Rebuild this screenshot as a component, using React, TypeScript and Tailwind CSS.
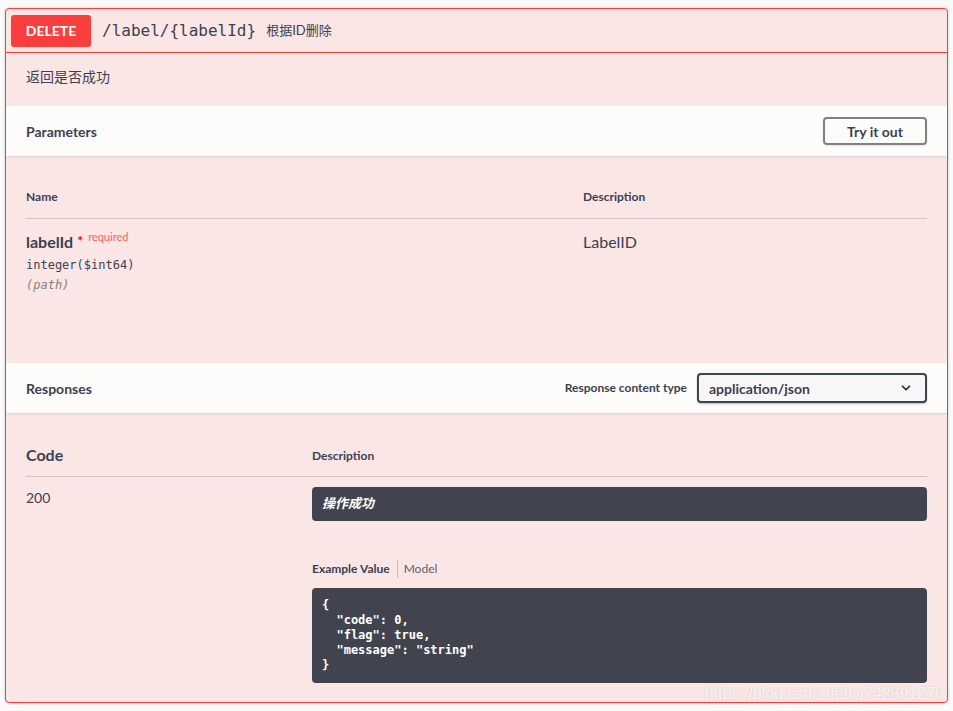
import { ChevronDown } from 'lucide-react';

const SANS = "font-['Lato','Noto_Sans_CJK_SC',sans-serif]";
const MONO = "font-['DejaVu_Sans_Mono',monospace]";

function SectionBar({ title, children }: { title: string; children?: React.ReactNode }) {
  return (
    <div className="flex items-center justify-between h-[50px] px-[20px] bg-[#fefbfb] shadow-[0_1px_2px_rgba(0,0,0,0.1)] relative">
      <h4 className="text-[14px] font-bold text-[#3b4151]">{title}</h4>
      {children}
    </div>
  );
}

export default function App() {
  return (
    <div className={`min-h-[711px] bg-[#fafafa] pt-[8px] ${SANS} text-[#3b4151]`}>
      <div className="relative ml-[5px] w-[943px] border border-[#f93e3e] rounded-[4px] bg-[#fbe6e6] shadow-[0_0_3px_rgba(0,0,0,0.19)]">
        {/* Summary */}
        <div className="flex items-center h-[44px] px-[5px] border-b border-[#f93e3e]">
          <span className="w-[80px] h-[32px] flex items-center justify-center rounded-[3px] bg-[#f93e3e] text-white text-[14px] font-bold">
            DELETE
          </span>
          <span className={`ml-[11px] text-[16px] text-[#3b4151] ${MONO}`}>/label/{'{labelId}'}</span>
          <span className="ml-[10px] text-[13px] text-[#3b4151]">根据ID删除</span>
        </div>

        {/* Description */}
        <div className="h-[53px] px-[20px] pt-[15px] text-[14px] leading-[18px]">返回是否成功</div>

        {/* Parameters */}
        <SectionBar title="Parameters">
          <button className="w-[104px] h-[28px] border-2 border-[#808080] rounded-[4px] text-[14px] font-bold text-[#3b4151] bg-transparent shadow-[0_1px_2px_rgba(0,0,0,0.1)]">
            Try it out
          </button>
        </SectionBar>
        <div className="h-[207px] px-[20px] pt-[32px]">
          <div className="grid grid-cols-[557px_1fr] border-b border-[#d9c3c3] pb-[12px] text-[12px] font-bold">
            <div>Name</div>
            <div>Description</div>
          </div>
          <div className="grid grid-cols-[557px_1fr] pt-[12px]">
            <div>
              <div className="flex items-start">
                <span className="text-[16px] font-bold leading-[22px]">labelId</span>
                <span className="ml-[4px] mt-[2px] text-[#ff0000] text-[14px] font-bold leading-[16px]">*</span>
                <span className="ml-[5px] -mt-[1px] text-[#ff6060] text-[11px] leading-[14px]">required</span>
              </div>
              <div className={`mt-[3px] text-[12px] leading-[18px] ${MONO}`}>integer($int64)</div>
              <div className={`mt-[2px] text-[12px] leading-[18px] italic text-[#808080] ${MONO}`}>(path)</div>
            </div>
            <div className="text-[16px] leading-[22px]">LabelID</div>
          </div>
        </div>

        {/* Responses */}
        <SectionBar title="Responses">
          <div className="flex items-center">
            <span className="text-[12px] font-bold mr-[10px]">Response content type</span>
            <div className="w-[230px] h-[30px] flex items-center justify-between pl-[10px] pr-[12px] border-2 border-[#41444e] rounded-[4px] bg-[#f7f7f7] shadow-[0_1px_2px_rgba(0,0,0,0.25)]">
              <span className="text-[14px] font-bold">application/json</span>
              <ChevronDown size={14} strokeWidth={3} className="text-[#2a2d35]" />
            </div>
          </div>
        </SectionBar>
        <div className="px-[20px] pt-[32px] pb-[19px]">
          <div className="grid grid-cols-[286px_1fr] items-end border-b border-[#cfc6c9] pb-[11px]">
            <div className="text-[16px] font-bold leading-[20px]">Code</div>
            <div className="text-[12px] font-bold leading-[18px]">Description</div>
          </div>
          <div className="grid grid-cols-[286px_1fr] pt-[10px]">
            <div className="text-[14px] leading-[20px] pt-[1px]">200</div>
            <div>
              <div className="h-[34px] flex items-center px-[10px] rounded-[4px] bg-[#41444e] text-white text-[13px] font-bold italic">
                操作成功
              </div>
              <div className="flex items-center mt-[38px] h-[20px] text-[12px]">
                <span className="font-bold pr-[7px] border-r border-[#c9b9bb]">Example Value</span>
                <span className="pl-[6px] text-[#5a6070]">Model</span>
              </div>
              <pre className={`mt-[9px] p-[10px] rounded-[4px] bg-[#41444e] text-white text-[12px] font-bold leading-[15px] ${MONO}`}>
{`{
  "code": 0,
  "flag": true,
  "message": "string"
}`}
              </pre>
            </div>
          </div>
        </div>

        <span className="absolute right-[3px] -bottom-[2px] text-[16px] leading-[20px] font-['Liberation_Sans',sans-serif] text-white/80 [text-shadow:0_0_2px_rgba(0,0,0,0.18)] pointer-events-none">
          https://blog.csdn.net/yi742891270
        </span>
      </div>
    </div>
  );
}
